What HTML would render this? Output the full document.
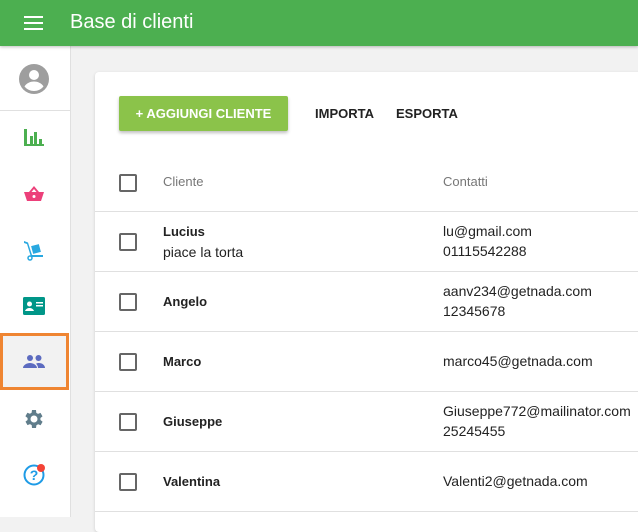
<!DOCTYPE html>
<html><head><style>
body{margin:0;width:638px;height:517px;overflow:hidden;background:#f2f2f2;font-family:"Liberation Sans",sans-serif;position:relative}
.top{position:absolute;left:0;top:0;width:638px;height:46px;background:#4caf50;box-shadow:0 1px 3px rgba(0,0,0,.25);z-index:2}
.top .t{position:absolute;left:70px;top:11px;color:#fff;font-size:20px}
.side{position:absolute;left:0;top:46px;width:70px;height:471px;background:#fff;border-right:1px solid #e0e0e0}
.ic{position:absolute;left:22px;width:24px;height:24px}
.card{position:absolute;left:95px;top:72px;width:560px;height:460px;background:#fff;border-radius:4px;box-shadow:0 1px 3px rgba(0,0,0,.15)}
.btn{position:absolute;left:24px;top:24px;width:169px;height:35px;background:#8bc34a;color:#fff;font-size:13px;font-weight:bold;line-height:35px;text-align:center;border-radius:2px;box-shadow:0 2px 3px rgba(0,0,0,.25)}
.lk{position:absolute;top:34px;font-size:13px;font-weight:bold;color:#222}
.row{position:absolute;left:0;width:560px;border-bottom:1px solid #e0e0e0;font-size:14px;color:#222}
.cb{position:absolute;left:24px;width:14px;height:14px;border:2px solid #666;border-radius:2px}
.n{position:absolute;left:68px;line-height:20px}
.n b{font-size:13px}
.c{position:absolute;left:348px;line-height:20px}
</style></head><body>
<div class="top">
<svg style="position:absolute;left:24px;top:15px" width="20" height="16"><rect y="1" width="19" height="2" fill="#fff"/><rect y="7" width="19" height="2" fill="#fff"/><rect y="13" width="19" height="2" fill="#fff"/></svg>
<div class="t">Base di clienti</div></div>
<div class="side">
<svg style="position:absolute;left:19px;top:18px" width="30" height="30" viewBox="0 0 30 30"><circle cx="15" cy="15" r="15" fill="#9e9e9e"/><circle cx="15" cy="11" r="5" fill="#fff"/><path d="M5.5 22.5c2-3.5 6-5 9.5-5s7.5 1.5 9.5 5c-2.5 3-6 4.5-9.5 4.5s-7-1.5-9.5-4.5z" fill="#fff"/></svg>
<div style="position:absolute;left:0;top:64px;width:70px;border-top:1px solid #e0e0e0"></div>
<svg class="ic" style="top:80px" viewBox="0 0 24 24"><rect x="2" y="3" width="3" height="17" fill="#4caf50"/><rect x="2" y="18" width="20" height="2" fill="#4caf50"/><rect x="8" y="10" width="3" height="10" fill="#4caf50"/><rect x="12" y="6" width="3" height="14" fill="#4caf50"/><rect x="17" y="13" width="3" height="7" fill="#4caf50"/></svg>
<svg class="ic" style="top:137px" viewBox="0 0 24 24"><path d="M12 3l-5 6h2.5L12 6l2.5 3H17zM2 9h20l-3 9H5z" fill="#ec407a"/><circle cx="12" cy="13.5" r="1.5" fill="#fff"/></svg>
<svg class="ic" style="top:192px" viewBox="0 0 24 24"><path d="M2 3l4 1.5 4 12.5h11v2H9L5 6 2 5z" fill="#29a8e0"/><rect x="10" y="7" width="8" height="8" fill="#29a8e0" transform="rotate(-15 14 11)"/><circle cx="8" cy="20" r="2" fill="#fff" stroke="#29a8e0" stroke-width="1.5"/></svg>
<svg class="ic" style="top:248px" viewBox="0 0 24 24"><rect x="1" y="3" width="22" height="18" rx="1.5" fill="#009688"/><circle cx="7.5" cy="10" r="2.5" fill="#fff"/><path d="M3 17c1-2.5 3-3 4.5-3s3.5.5 4.5 3z" fill="#fff"/><rect x="14" y="8" width="7" height="1.5" fill="#fff"/><rect x="14" y="11" width="7" height="1.5" fill="#fff"/></svg>
<div style="position:absolute;left:0;top:287px;width:63px;height:51px;border:3px solid #ef8532;background:#f2f2f2"></div>
<svg class="ic" style="top:304px" viewBox="0 0 24 24"><circle cx="8" cy="8" r="3" fill="#5c6bc0"/><circle cx="16.5" cy="8" r="3" fill="#5c6bc0"/><path d="M1 18c0-3 4-5 7-5s7 2 7 5zM16 18c0-2-1-3.5-2-4.3 1-.5 2-.7 3-.7 3 0 6 2 6 5z" fill="#5c6bc0"/></svg>
<svg class="ic" style="top:361px" viewBox="0 0 24 24"><path d="M19.4 13a7.5 7.5 0 000-2l2.1-1.6-2-3.5-2.5 1a7 7 0 00-1.7-1L15 3h-4l-.4 2.7a7 7 0 00-1.7 1l-2.5-1-2 3.5L6.6 11a7.5 7.5 0 000 2l-2.1 1.6 2 3.5 2.5-1a7 7 0 001.7 1L11 21h4l.4-2.7a7 7 0 001.7-1l2.5 1 2-3.5zM13 15.5A3.5 3.5 0 1113 8.5a3.5 3.5 0 010 7z" fill="#607d8b" transform="translate(-1 0)"/></svg>
<svg class="ic" style="top:417px" viewBox="0 0 24 24"><circle cx="12" cy="12" r="9.5" fill="none" stroke="#1e9be6" stroke-width="2"/><text x="12" y="17" font-size="14" font-weight="bold" text-anchor="middle" fill="#1e9be6" font-family="Liberation Sans">?</text><circle cx="19" cy="5" r="4" fill="#f44336"/></svg>
</div>
<div class="card">
<div class="btn">+ AGGIUNGI CLIENTE</div>
<div class="lk" style="left:220px">IMPORTA</div>
<div class="lk" style="left:301px">ESPORTA</div>
<div class="row" style="top:78px;height:61px"><div class="cb" style="top:24px"></div><div class="n" style="top:22px;font-size:13px;color:#777">Cliente</div><div class="c" style="top:22px;font-size:13px;color:#777">Contatti</div></div>
<div class="row" style="top:140px;height:59px"><div class="cb" style="top:21px"></div><div class="n" style="top:9px"><b>Lucius</b><br>piace la torta</div><div class="c" style="top:9px">lu@gmail.com<br>01115542288</div></div>
<div class="row" style="top:200px;height:59px"><div class="cb" style="top:21px"></div><div class="n" style="top:19px"><b>Angelo</b></div><div class="c" style="top:9px">aanv234@getnada.com<br>12345678</div></div>
<div class="row" style="top:260px;height:59px"><div class="cb" style="top:21px"></div><div class="n" style="top:19px"><b>Marco</b></div><div class="c" style="top:19px">marco45@getnada.com</div></div>
<div class="row" style="top:320px;height:59px"><div class="cb" style="top:21px"></div><div class="n" style="top:19px"><b>Giuseppe</b></div><div class="c" style="top:9px">Giuseppe772@mailinator.com<br>25245455</div></div>
<div class="row" style="top:380px;height:59px"><div class="cb" style="top:21px"></div><div class="n" style="top:19px"><b>Valentina</b></div><div class="c" style="top:19px">Valenti2@getnada.com</div></div>
</div>
</body></html>
